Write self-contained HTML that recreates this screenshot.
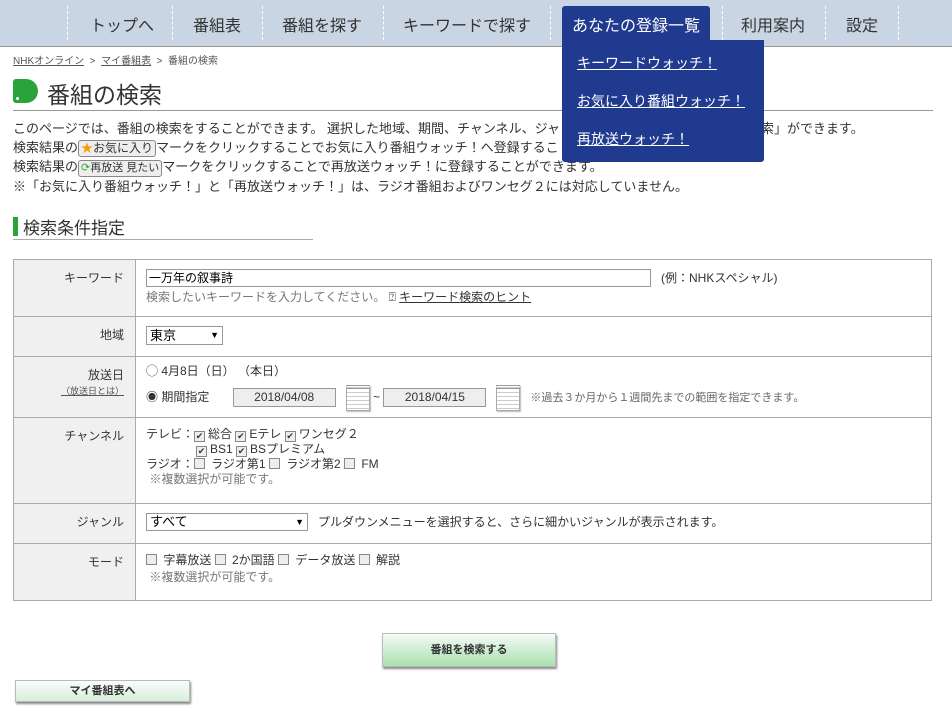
<!DOCTYPE html>
<html><head><meta charset="utf-8"><style>
*{margin:0;padding:0;box-sizing:border-box}
body{width:952px;height:712px;overflow:hidden;background:#fff;font-family:"Liberation Sans","Noto Sans CJK JP",sans-serif;color:#333;position:relative;font-size:13px}
.a{position:absolute;white-space:nowrap}
.nav{position:absolute;left:0;top:0;width:952px;height:47px;background:#c9d5e3;border-bottom:1px solid #999}
.sep{position:absolute;top:6px;height:34px;border-left:1px dashed #fff}
.ni{position:absolute;top:12px;font-size:16px;color:#333}
.dd{position:absolute;left:562px;top:40px;width:202px;height:122px;background:#1f3a8f;border-radius:0 0 3px 3px}
.dd a{position:absolute;left:15px;color:#fff;font-size:14px;text-decoration:underline}
table{position:absolute;left:13px;top:259px;width:919px;border-collapse:collapse}
td{border:1px solid #aaa;vertical-align:top;font-size:12px}
td.l{width:122px;background:#f0f0f0;text-align:right;padding:9px 11px 0 0}
td.r{padding:9px 10px 0 10px}
.cb{display:inline-block;width:11px;height:11px;border:1px solid #888;background:#eee;vertical-align:-1px;margin:0 3px 0 0;font-size:9px;line-height:9px;text-align:center}
.btn{position:absolute;border:1px solid #bbb;box-shadow:1px 2px 2px #888;font-size:11px;font-weight:bold;text-align:center;color:#333}
.cal{display:inline-block;width:24px;height:26px;border:1px solid #aaa;border-top:4px double #999;vertical-align:middle;background:repeating-linear-gradient(#fff 0 3px,#ccc 3px 4px);box-shadow:1px 1px 1px #bbb}
.di{display:inline-block;width:103px;height:19px;border:1px solid #999;background:#eee;text-align:center;line-height:17px;vertical-align:middle}
</style></head><body>
<div class="nav">
<div class="sep" style="left:67px"></div><div class="sep" style="left:172px"></div><div class="sep" style="left:262px"></div><div class="sep" style="left:383px"></div><div class="sep" style="left:550px"></div><div class="sep" style="left:722px"></div><div class="sep" style="left:825px"></div><div class="sep" style="left:898px"></div>
<div class="ni" style="left:90px">トップへ</div>
<div class="ni" style="left:193px">番組表</div>
<div class="ni" style="left:282px">番組を探す</div>
<div class="ni" style="left:403px">キーワードで探す</div>
<div style="position:absolute;left:562px;top:6px;width:148px;height:36px;background:#1f3a8f;border-radius:3px 3px 0 0"></div>
<div class="ni" style="left:572px;color:#fff">あなたの登録一覧</div>
<div class="ni" style="left:741px">利用案内</div>
<div class="ni" style="left:846px">設定</div>
</div>
<div class="a" style="left:13px;top:52px;font-size:10px;color:#555"><u>NHKオンライン</u> &nbsp;&gt;&nbsp; <u>マイ番組表</u> &nbsp;&gt;&nbsp; 番組の検索</div>
<div class="a" style="left:13px;top:79px;width:25px;height:24px;background:#2aa33b;border-radius:3px 12px 12px 3px"></div>
<div class="a" style="left:16px;top:97px;width:3px;height:3px;background:#fff;border-radius:2px"></div>
<div class="a" style="left:47px;top:76px;font-size:23px;color:#333">番組の検索</div>
<div class="a" style="left:13px;top:110px;width:920px;border-top:1px solid #999"></div>
<div class="a" style="left:13px;top:119px;line-height:19px;font-size:13px">このページでは、番組の検索をすることができます。 選択した地域、期間、チャンネル、ジャ<span style="padding-left:188px">検索」ができます。</span><br>
検索結果の<span style="display:inline-block;border:1px solid #888;border-radius:3px;background:#eee;font-size:12px;padding:0 2px;line-height:15px"><span style="color:#f90">★</span>お気に入り</span>マークをクリックすることでお気に入り番組ウォッチ！へ登録するこ<br>
検索結果の<span style="display:inline-block;border:1px solid #888;border-radius:3px;background:#eee;font-size:11px;padding:0 2px;line-height:15px"><span style="color:#3a3">⟳</span>再放送 見たい</span>マークをクリックすることで再放送ウォッチ！に登録することができます。<br>
※「お気に入り番組ウォッチ！」と「再放送ウォッチ！」は、ラジオ番組およびワンセグ２には対応していません。</div>
<div class="a" style="left:13px;top:217px;width:5px;height:19px;background:#2aa33b"></div>
<div class="a" style="left:23px;top:214px;font-size:17px">検索条件指定</div>
<div class="a" style="left:13px;top:239px;width:300px;border-top:1px solid #aaa"></div>
<div class="dd"><a style="top:13px">キーワードウォッチ！</a><a style="top:51px">お気に入り番組ウォッチ！</a><a style="top:89px">再放送ウォッチ！</a></div>
<table>
<tr style="height:57px"><td class="l">キーワード</td><td class="r"><span style="display:inline-block;width:505px;height:18px;border:1px solid #999;padding:0 2px;line-height:16px;color:#000">一万年の叙事詩</span>&nbsp;&nbsp; (例：NHKスペシャル)<br><span style="color:#777;line-height:20px">検索したいキーワードを入力してください。 <span style="color:#333">⍰ <u>キーワード検索のヒント</u></span></span></td></tr>
<tr style="height:40px"><td class="l">地域</td><td class="r"><span style="display:inline-block;width:77px;height:19px;border:1px solid #999;padding:0 3px;color:#000;line-height:17px;font-size:13px">東京<span style="float:right;font-size:9px">▼</span></span></td></tr>
<tr style="height:61px"><td class="l">放送日<br><u style="font-size:9px;color:#555">（放送日とは）</u></td><td class="r" style="line-height:26px;padding-top:1px">◯ 4月8日（日） （本日）<br>◉ 期間指定 &nbsp;&nbsp;&nbsp;&nbsp;&nbsp;&nbsp;<span class="di">2018/04/08</span> &nbsp;&nbsp;<span class="cal"></span> ~ <span class="di">2018/04/15</span> &nbsp;&nbsp;<span class="cal"></span> &nbsp;&nbsp;<span style="color:#666;font-size:11px">※過去３か月から１週間先までの範囲を指定できます。</span></td></tr>
<tr style="height:86px"><td class="l">チャンネル</td><td class="r" style="line-height:15px">テレビ：<span class="cb">✔</span>総合 <span class="cb">✔</span>Eテレ <span class="cb">✔</span>ワンセグ２<br><span style="padding-left:50px"></span><span class="cb">✔</span>BS1 <span class="cb">✔</span>BSプレミアム<br>ラジオ：<span class="cb"></span> ラジオ第1 <span class="cb"></span> ラジオ第2 <span class="cb"></span> FM<br><span style="color:#777">&nbsp;※複数選択が可能です。</span></td></tr>
<tr style="height:40px"><td class="l">ジャンル</td><td class="r"><span style="display:inline-block;width:162px;height:18px;border:1px solid #999;padding:0 3px;color:#000;line-height:16px;font-size:13px">すべて<span style="float:right;font-size:9px">▼</span></span> &nbsp;&nbsp;プルダウンメニューを選択すると、さらに細かいジャンルが表示されます。</td></tr>
<tr style="height:57px"><td class="l">モード</td><td class="r" style="line-height:17px;padding-top:8px"><span class="cb"></span> 字幕放送 <span class="cb"></span> 2か国語 <span class="cb"></span> データ放送 <span class="cb"></span> 解説<br><span style="color:#777">&nbsp;※複数選択が可能です。</span></td></tr>
</table>
<div class="btn" style="left:382px;top:633px;width:174px;height:34px;line-height:32px;background:linear-gradient(#f6fbf6,#a8e0b0)">番組を検索する</div>
<div class="btn" style="left:15px;top:680px;width:175px;height:22px;line-height:20px;background:linear-gradient(#fbfdfb,#d6eed9)">マイ番組表へ</div>
</body></html>
